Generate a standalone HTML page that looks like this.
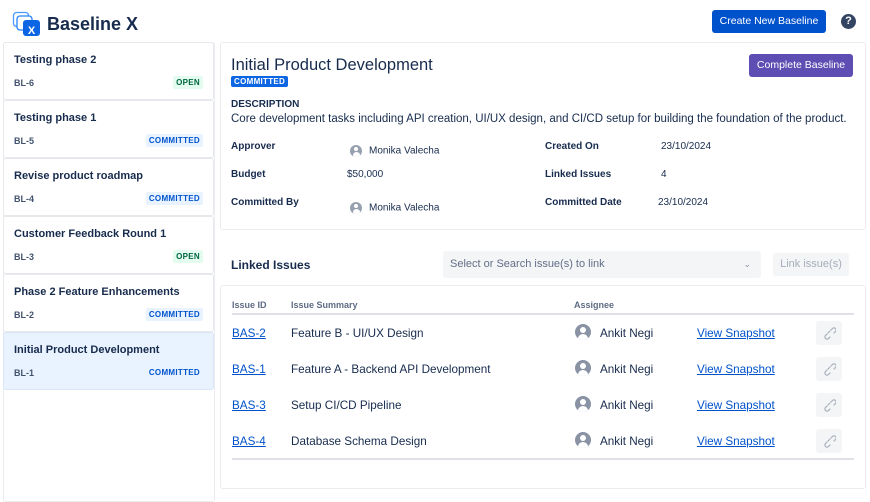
<!DOCTYPE html>
<html><head><meta charset="utf-8"><style>
*{box-sizing:border-box;margin:0;padding:0}
body{width:870px;height:495px;overflow:hidden;background:#fff;font-family:"Liberation Sans",sans-serif;color:#172b4d;position:relative}
.a{position:absolute}
.side{left:3px;top:42px;width:212px;height:460px;border:1px solid #ebecf0;border-radius:3px}
.card{position:absolute;left:3px;width:211px;height:58px;border:1px solid #e6e8ec;border-radius:3px;background:#fff}
.card .t{position:absolute;left:10px;top:11px;font-size:11px;font-weight:bold;color:#172b4d}
.card .id{position:absolute;left:10px;top:35px;font-size:9px;font-weight:bold;color:#42526e}
.lz{position:absolute;right:10px;top:33px;font-size:8px;font-weight:bold;padding:2px 3px;border-radius:2px;letter-spacing:.3px}
.open{background:#e3fcef;color:#006644}
.com{background:#e9f2ff;color:#0055cc}
.lbl{font-size:10px;font-weight:bold;color:#172b4d}
.val{font-size:10px;color:#172b4d}
.av{display:inline-block;width:12px;height:12px;border-radius:50%;background:#97a0af;vertical-align:middle;margin-right:7px;position:relative;overflow:hidden}
.av:before{content:"";position:absolute;left:4px;top:2px;width:4px;height:4px;border-radius:50%;background:#fff}
.av:after{content:"";position:absolute;left:2.5px;top:7px;width:7px;height:6px;border-radius:50%;background:#fff}
.row{position:absolute;left:232px;width:622px;height:36px;font-size:11.7px}
.row span{position:absolute;top:12px}
.lk{color:#0052cc;text-decoration:underline}
.bav{width:16px;height:16px;left:343px;top:9px!important;border-radius:50%;background:#8993a4;overflow:hidden}
.bav:before{content:"";position:absolute;left:5px;top:3px;width:6px;height:6px;border-radius:50%;background:#fff}
.bav:after{content:"";position:absolute;left:3px;top:10px;width:10px;height:9px;border-radius:50%;background:#fff}
.ub{left:584px;top:6px!important;width:26px;height:24px;background:#f4f5f7;border-radius:3px}
</style></head><body>
<svg class="a" style="left:12px;top:11px" width="30" height="26" viewBox="0 0 30 26"><rect x="1.5" y="1.5" width="15" height="14" rx="3" fill="#fff" stroke="#4c9aff" stroke-width="1.3"/><rect x="5" y="5" width="15" height="14" rx="3" fill="#fff" stroke="#2684ff" stroke-width="1.3"/><rect x="11" y="9" width="17" height="16" rx="3" fill="#0c66e4"/><text x="19.5" y="23" font-size="11" font-weight="bold" fill="#fff" text-anchor="middle" font-family="Liberation Sans">X</text></svg>
<div class="a" style="left:47px;top:14px;font-size:18px;font-weight:bold;color:#172b4d">Baseline X</div>
<div class="a" style="left:712px;top:10px;width:114px;height:23px;background:#0052cc;border-radius:3px;color:#fff;font-size:10.5px;text-align:center;line-height:23px">Create New Baseline</div>
<div class="a" style="left:841px;top:14px;width:15px;height:15px;border-radius:50%;background:#344563;color:#fff;font-size:11px;font-weight:bold;text-align:center;line-height:15px">?</div>

<div class="a side"></div>
<div class="card" style="top:42px"><div class="t">Testing phase 2</div><div class="id">BL-6</div><div class="lz open">OPEN</div></div>
<div class="card" style="top:100px"><div class="t">Testing phase 1</div><div class="id">BL-5</div><div class="lz com">COMMITTED</div></div>
<div class="card" style="top:158px"><div class="t">Revise product roadmap</div><div class="id">BL-4</div><div class="lz com">COMMITTED</div></div>
<div class="card" style="top:216px"><div class="t">Customer Feedback Round 1</div><div class="id">BL-3</div><div class="lz open">OPEN</div></div>
<div class="card" style="top:274px"><div class="t">Phase 2 Feature Enhancements</div><div class="id">BL-2</div><div class="lz com">COMMITTED</div></div>
<div class="card" style="top:332px;background:#e9f2ff;border-color:#dbe6f7"><div class="t">Initial Product Development</div><div class="id">BL-1</div><div class="lz com">COMMITTED</div></div>

<div class="a" style="left:220px;top:42px;width:646px;height:188px;border:1px solid #ebecf0;border-radius:3px"></div>
<div class="a" style="left:231px;top:56px;font-size:16.5px;color:#172b4d">Initial Product Development</div>
<div class="a" style="left:231px;top:76px;font-size:8px;font-weight:bold;color:#fff;background:#0c66e4;padding:1px 3px;border-radius:2px;letter-spacing:.3px">COMMITTED</div>
<div class="a" style="left:749px;top:54px;width:104px;height:23px;background:#5e4db2;border-radius:3px;color:#fff;font-size:10.5px;text-align:center;line-height:23px">Complete Baseline</div>
<div class="a lbl" style="left:231px;top:99px">DESCRIPTION</div>
<div class="a" style="left:231px;top:113px;font-size:11.5px;color:#172b4d;white-space:nowrap">Core development tasks including API creation, UI/UX design, and CI/CD setup for building the foundation of the product.</div>
<div class="a lbl" style="left:231px;top:141px">Approver</div>
<div class="a val" style="left:350px;top:145px"><span class="av"></span>Monika Valecha</div>
<div class="a lbl" style="left:545px;top:141px">Created On</div>
<div class="a val" style="left:661px;top:141px">23/10/2024</div>
<div class="a lbl" style="left:231px;top:169px">Budget</div>
<div class="a val" style="left:347px;top:169px">$50,000</div>
<div class="a lbl" style="left:545px;top:169px">Linked Issues</div>
<div class="a val" style="left:661px;top:169px">4</div>
<div class="a lbl" style="left:231px;top:197px">Committed By</div>
<div class="a val" style="left:350px;top:202px"><span class="av"></span>Monika Valecha</div>
<div class="a lbl" style="left:545px;top:197px">Committed Date</div>
<div class="a val" style="left:658px;top:197px">23/10/2024</div>

<div class="a" style="left:231px;top:258px;font-size:12px;font-weight:bold;color:#172b4d">Linked Issues</div>
<div class="a" style="left:443px;top:251px;width:318px;height:27px;background:#f4f5f7;border-radius:3px;font-size:11px;color:#626f86;line-height:27px;padding-left:7px">Select or Search issue(s) to link<span style="position:absolute;right:10px;top:0;font-size:9px;color:#8590a2">&#8964;</span></div>
<div class="a" style="left:773px;top:253px;width:76px;height:23px;background:#f4f5f7;border-radius:3px;font-size:11px;color:#a5adba;text-align:center;line-height:23px">Link issue(s)</div>

<div class="a" style="left:220px;top:285px;width:646px;height:204px;border:1px solid #ebecf0;border-radius:3px"></div>
<div class="a" style="left:232px;top:300px;font-size:9px;font-weight:bold;color:#5e6c84">Issue ID</div>
<div class="a" style="left:291px;top:300px;font-size:9px;font-weight:bold;color:#5e6c84">Issue Summary</div>
<div class="a" style="left:574px;top:300px;font-size:9px;font-weight:bold;color:#5e6c84">Assignee</div>
<div class="a" style="left:232px;top:313px;width:622px;height:2px;background:#dfe1e6"></div>

<div class="row" style="top:315px"><span class="lk">BAS-2</span><span style="left:59px">Feature B - UI/UX Design</span><span class="bav"></span><span style="left:368px">Ankit Negi</span><span class="lk" style="left:465px">View Snapshot</span><span class="ub"></span></div>
<div class="row" style="top:351px"><span class="lk">BAS-1</span><span style="left:59px">Feature A - Backend API Development</span><span class="bav"></span><span style="left:368px">Ankit Negi</span><span class="lk" style="left:465px">View Snapshot</span><span class="ub"></span></div>
<div class="row" style="top:387px"><span class="lk">BAS-3</span><span style="left:59px">Setup CI/CD Pipeline</span><span class="bav"></span><span style="left:368px">Ankit Negi</span><span class="lk" style="left:465px">View Snapshot</span><span class="ub"></span></div>
<div class="row" style="top:423px"><span class="lk">BAS-4</span><span style="left:59px">Database Schema Design</span><span class="bav"></span><span style="left:368px">Ankit Negi</span><span class="lk" style="left:465px">View Snapshot</span><span class="ub"></span></div>
<svg class="a" style="left:822px;top:325px" width="14" height="134" viewBox="0 0 14 134"><g fill="none" stroke="#a5adba" stroke-width="1.2" stroke-linecap="round">
<g id="u"><path d="M5 9 L3.5 10.5 a2 2 0 0 0 3 3 L8 12 M9 5 L10.5 3.5 a2 2 0 0 1 3 3 L12 8 M6 8 L8 6"/></g>
<use href="#u" y="36"/><use href="#u" y="72"/><use href="#u" y="108"/></g></svg>
<div class="a" style="left:232px;top:458px;width:622px;height:2px;background:#dfe1e6"></div>
</body></html>
